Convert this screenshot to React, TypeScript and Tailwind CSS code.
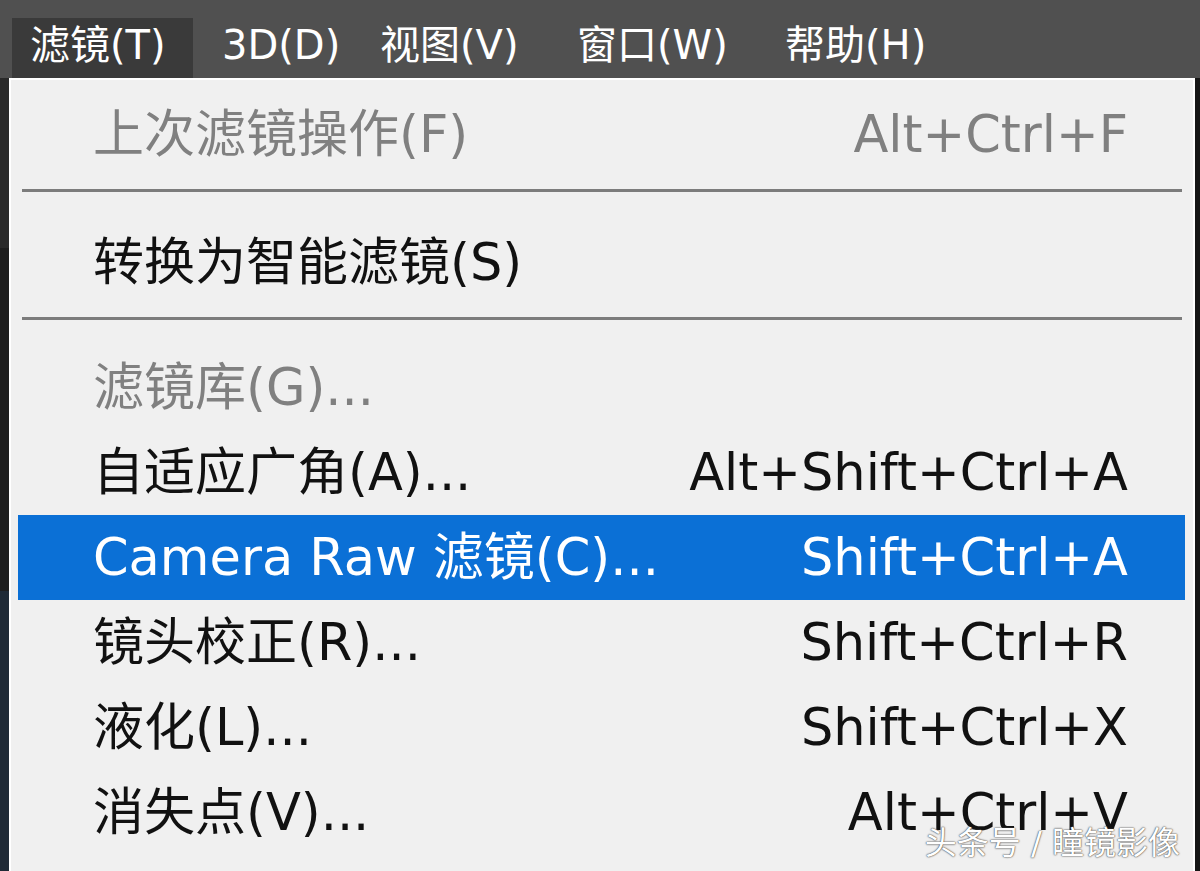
import React from "react";

const font = { fontFamily: '"DejaVu Sans", "Noto Sans CJK SC", sans-serif' };

type Item = { label: string; shortcut?: string; disabled?: boolean; active?: boolean };

const Row = ({ label, shortcut, disabled, active }: Item) => (
  <div
    className={
      "ml-[7px] mr-[8px] h-[85px] flex items-center justify-between pl-[75px] pr-[57px] text-[51px] leading-none " +
      (active ? "bg-[#0b70d6] text-white" : disabled ? "text-[#808080]" : "text-[#111]")
    }
  >
    <span>{label}</span>
    {shortcut && <span>{shortcut}</span>}
  </div>
);

const Sep = ({ h }: { h: string }) => (
  <div className={h + " pt-[12px]"}>
    <div className="mx-[11px] h-[3px] bg-[#7c7c7c]" />
  </div>
);

export default function App() {
  return (
    <div className="w-[1200px] h-[871px] overflow-hidden bg-[#262626] flex flex-col relative" style={font}>
      <div className="h-[78px] bg-[#505050] flex items-end pl-[12px] text-white text-[40px] leading-none shrink-0">
        <div className="h-[60px] bg-[#3a3a3a] flex items-center pl-[18px] pb-[6px] w-[181px]">滤镜(T)</div>
        <div className="h-[60px] flex items-center pl-[29px] pb-[6px] w-[187px]">3D(D)</div>
        <div className="h-[60px] flex items-center pb-[6px] w-[197px]">视图(V)</div>
        <div className="h-[60px] flex items-center pb-[6px] w-[208px]">窗口(W)</div>
        <div className="h-[60px] flex items-center pb-[6px]">帮助(H)</div>
      </div>
      <div className="flex flex-1 min-h-0">
        <div className="w-[9px] bg-[#242424] shrink-0 flex flex-col">
          <div className="h-[170px] bg-[#2a2a2a]" />
          <div className="flex-1 bg-[#1e1e1e]" />
          <div className="h-[280px] bg-[#1f2a36]" />
        </div>
        <div className="flex-1 border-t-2 border-l-2 border-r-2 border-white bg-[#f0f0f0] pt-[12px]">
          <Row label="上次滤镜操作(F)" shortcut="Alt+Ctrl+F" disabled />
          <Sep h="h-[43px]" />
          <Row label="转换为智能滤镜(S)" />
          <Sep h="h-[40px]" />
          <Row label="滤镜库(G)..." disabled />
          <Row label="自适应广角(A)..." shortcut="Alt+Shift+Ctrl+A" />
          <Row label="Camera Raw 滤镜(C)..." shortcut="Shift+Ctrl+A" active />
          <Row label="镜头校正(R)..." shortcut="Shift+Ctrl+R" />
          <Row label="液化(L)..." shortcut="Shift+Ctrl+X" />
          <Row label="消失点(V)..." shortcut="Alt+Ctrl+V" />
        </div>
        <div className="w-[5px] bg-[#161616] shrink-0" />
      </div>
      <div className="absolute right-[20px] bottom-[12px] text-[32px] text-white leading-none [text-shadow:0_0_2px_#444,0_0_1px_#444]">
        头条号 / 瞳镜影像
      </div>
    </div>
  );
}
